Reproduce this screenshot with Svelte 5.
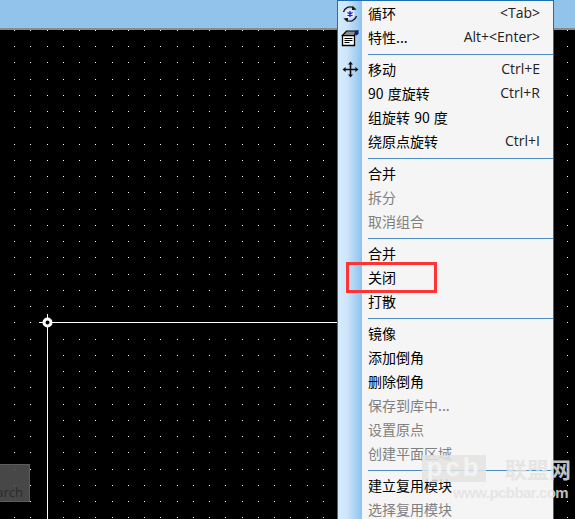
<script lang="ts">
  // canvas grid, rounded to whole pixels so the dots stay crisp
  const STEP = 16.25
  const xs = Array.from({ length: 36 }, (_, i) => Math.round(14.2 + STEP * i))
  const ys = Array.from({ length: 31 }, (_, i) => Math.round(29.9 + STEP * i))

  type Row = { label?: string; keys?: string; off?: boolean; icon?: string; sep?: boolean }

  const rows: Row[] = [
    { label: '循环', keys: '<Tab>', icon: 'cycle' },
    { label: '特性...', keys: 'Alt+<Enter>', icon: 'props' },
    { sep: true },
    { label: '移动', keys: 'Ctrl+E', icon: 'move' },
    { label: '90 度旋转', keys: 'Ctrl+R' },
    { label: '组旋转 90 度' },
    { label: '绕原点旋转', keys: 'Ctrl+I' },
    { sep: true },
    { label: '合并' },
    { label: '拆分', off: true },
    { label: '取消组合', off: true },
    { sep: true },
    { label: '合并' },
    { label: '关闭' },
    { label: '打散' },
    { sep: true },
    { label: '镜像' },
    { label: '添加倒角' },
    { label: '删除倒角' },
    { label: '保存到库中...', off: true },
    { label: '设置原点', off: true },
    { label: '创建平面区域', off: true },
    { sep: true },
    { label: '建立复用模块' },
    { label: '选择复用模块', off: true }
  ]
</script>

<div class="screen">
  <div class="topbar"></div>

  <div class="canvas">
    <svg class="grid" width="575" height="519" viewBox="0 0 575 519">
      {#each ys as y}
        {#each xs as x}
          <rect {x} {y} width="1" height="1" fill="#fff" />
        {/each}
      {/each}
      <path d="M47.5 322V519M47.5 322.5H338" stroke="#fff" stroke-width="1" fill="none" />
      <path d="M39 322.5H54M47.5 314V331" stroke="#fff" stroke-width="1" />
      <circle cx="47.5" cy="322.5" r="3.5" fill="#000" stroke="#fff" stroke-width="3" />
    </svg>
    <div class="search"><span>arch</span></div>
  </div>

  <div class="menu">
    {#each rows as row}
      {#if row.sep}
        <div class="sep"></div>
      {:else}
        <div class="row" class:off={row.off}>
          <span class="gutter">
            {#if row.icon === 'cycle'}
              <svg width="18" height="18" viewBox="0 0 18 18">
                <path d="M2.5 7A6.8 6.8 0 0 1 12.5 2.8" fill="none" stroke="#1a1a1a" stroke-width="1.3" />
                <path d="M15.5 11A6.8 6.8 0 0 1 5.5 15.2" fill="none" stroke="#1a1a1a" stroke-width="1.3" />
                <path d="M11.5 .8L15.6 4.4L10.8 5.2Z" fill="#1a1a1a" />
                <path d="M6.5 17.2L2.4 13.6L7.2 12.8Z" fill="#1a1a1a" />
                <circle cx="9" cy="9" r="4.6" fill="#eceeff" />
                <path d="M9 6V12M6.4 7.5L11.6 10.5M11.6 7.5L6.4 10.5" stroke="#1c1cf2" stroke-width="1.4" />
              </svg>
            {:else if row.icon === 'props'}
              <svg width="18" height="18" viewBox="0 0 18 18">
                <path d="M1.5 6.5H13.5V16.5H1.5Z" fill="#fff" stroke="#000" stroke-width="1.3" />
                <path d="M1.5 6.5L5.5 2H15L13.5 6.5Z" fill="#8a8a8a" stroke="#000" stroke-width="1.2" />
                <path d="M3.5 9.5H11.5M3.5 11.5H11.5M3.5 13.5H8.5" stroke="#000" stroke-width="1" />
                <path d="M13.5 2.5L17.5 .8V5L15 6.8Z" fill="#14148c" />
              </svg>
            {:else if row.icon === 'move'}
              <svg width="17" height="17" viewBox="0 0 17 17">
                <path d="M8.5 2V15M2 8.5H15" stroke="#111" stroke-width="1.6" />
                <path d="M8.5 .5L11 3.6H6Z M8.5 16.5L11 13.4H6Z M.5 8.5L3.6 6V11Z M16.5 8.5L13.4 6V11Z" fill="#111" />
              </svg>
            {/if}
          </span>
          <span class="label">{row.label}</span>
          {#if row.keys}<span class="keys">{row.keys}</span>{/if}
        </div>
      {/if}
    {/each}
  </div>

  <div class="callout"></div>

  <div class="watermark">
    <div class="wm-top">
      <span class="wm-logo">pcb</span>
      <span class="wm-name">联盟网</span>
    </div>
    <div class="wm-url">www.pcbbar.com</div>
  </div>
</div>

<style>
  :global(body) {
    margin: 0;
    background: #000;
  }

  .screen {
    position: relative;
    display: flex;
    flex-direction: column;
    width: 575px;
    height: 519px;
    overflow: hidden;
    background: #000;
    font-family: "Noto Sans CJK SC", "Open Sans", sans-serif;
  }

  .topbar {
    position: relative;
    z-index: 1;
    flex: none;
    height: 28px;
    background: #92c4eb;
    border-bottom: 2px solid #8a8a8a;
  }

  .canvas {
    flex: 1;
  }

  .grid {
    position: absolute;
    top: 0;
    left: 0;
    pointer-events: none;
  }

  .search {
    position: absolute;
    left: -1px;
    top: 464px;
    display: flex;
    justify-content: flex-end;
    width: 31px;
    height: 38px;
    box-sizing: border-box;
    padding: 18px 6px 0 0;
    border: 1px solid #5c5c5c;
    background: rgba(84, 84, 84, 0.85);
    color: #2a2a2a;
    font: 13px/18px "Open Sans", sans-serif;
    white-space: nowrap;
  }

  .menu {
    position: absolute;
    z-index: 2;
    top: 0;
    left: 337px;
    bottom: -4px;
    width: 217px;
    box-sizing: border-box;
    padding-top: 2px;
    border: 1px solid #1f6fb4;
    background: #f5f5f5;
  }

  .menu::before {
    content: "";
    position: absolute;
    top: 0;
    bottom: 0;
    left: 0;
    width: 24px;
    background: linear-gradient(90deg, #d5ebfd 0%, #cfe6fb 35%, #8cc3ee 100%);
  }

  .row {
    position: relative;
    display: flex;
    align-items: center;
    height: 24px;
    box-sizing: border-box;
    padding-bottom: 4px;
    color: #000;
    font-size: 14px;
    line-height: 20px;
    word-spacing: 1px;
    white-space: nowrap;
  }

  .row.off {
    color: #808080;
  }

  .gutter {
    display: flex;
    align-items: center;
    justify-content: center;
    flex: none;
    width: 24px;
    height: 20px;
    margin-top: 1px;
    margin-right: 6px;
  }

  .keys {
    margin-left: auto;
    margin-right: 13px;
    color: #222;
    font-family: "Open Sans", sans-serif;
    font-size: 14px;
  }

  .sep {
    position: relative;
    height: 1px;
    margin: 3px 0 4px 30px;
    background: #4a8dc4;
  }

  .callout {
    position: absolute;
    z-index: 3;
    left: 346px;
    top: 262px;
    width: 91px;
    height: 31px;
    box-sizing: border-box;
    border: 3px solid #ff3535;
  }

  .watermark {
    position: absolute;
    z-index: 4;
    left: 422px;
    top: 455px;
    width: 153px;
    color: rgba(227, 227, 225, 0.85);
    font-family: "Liberation Sans", "Noto Sans CJK SC", sans-serif;
    font-weight: 700;
    pointer-events: none;
  }

  .wm-top {
    display: flex;
    align-items: center;
    gap: 19px;
    height: 27px;
  }

  .wm-logo {
    flex: none;
    width: 64px;
    height: 27px;
    background: rgba(227, 227, 225, 0.85);
    color: rgba(245, 245, 245, 0.9);
    font-size: 26px;
    letter-spacing: 3px;
    line-height: 24px;
    text-align: center;
  }

  .wm-name {
    font-family: "Noto Sans CJK SC", sans-serif;
    font-size: 22px;
    line-height: 27px;
  }

  .wm-url {
    margin-top: 2px;
    padding-left: 31px;
    font-size: 15px;
    letter-spacing: -0.55px;
    line-height: 17px;
    white-space: nowrap;
  }
</style>
